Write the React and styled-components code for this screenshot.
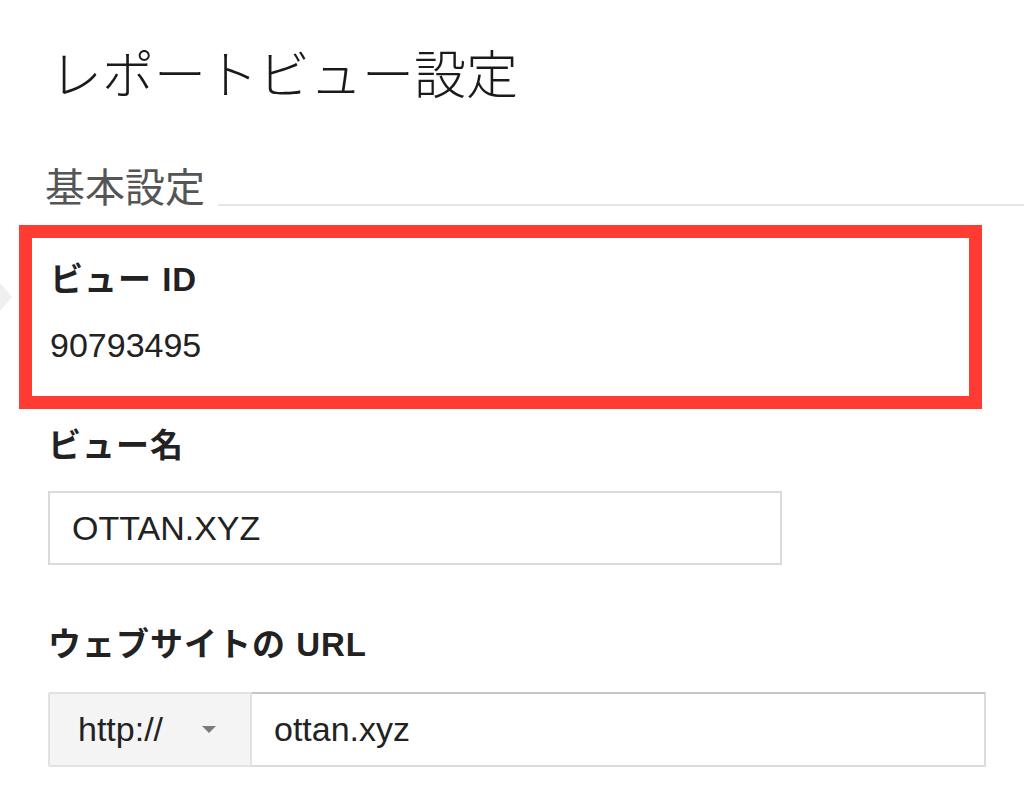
import styled, { createGlobalStyle } from "styled-components";

const GlobalStyle = createGlobalStyle`
  html, body {
    margin: 0;
    padding: 0;
    background: #fff;
  }
  body {
    font-family: "Liberation Sans", "Noto Sans CJK JP", sans-serif;
    color: #222;
  }
`;

const Page = styled.div`
  position: relative;
  width: 1024px;
  height: 802px;
  overflow: hidden;
  padding: 50px 0 0 48px;
  box-sizing: border-box;
`;

const Title = styled.h1`
  margin: 0;
  font-size: 52px;
  line-height: 52px;
  font-weight: 300;
  color: #1a1a1a;
  padding-left: 2px;
`;

const SectionHeader = styled.div`
  display: flex;
  align-items: flex-end;
  margin: 66px 0 0 -3px;
`;

const SectionTitle = styled.h2`
  margin: 0;
  font-size: 40px;
  line-height: 40px;
  font-weight: 400;
  color: #555;
`;

const Divider = styled.div`
  flex: 1;
  height: 2px;
  margin: 0 0 2px 13px;
  background: #e6e6e6;
`;

const Highlight = styled.div`
  width: 963px;
  margin: 17px 0 0 -29px;
  padding: 22px 0 31px 18px;
  border: 13px solid #ff3b33;
  box-sizing: border-box;
`;

const Label = styled.div`
  font-size: 33px;
  line-height: 40px;
  font-weight: 700;
  letter-spacing: 1px;
  color: #222;
  margin-top: ${(p) => p.$top || 0}px;
`;

const Value = styled.div`
  font-size: 34px;
  line-height: 40px;
  margin-top: 25px;
  color: #222;
`;

const TextBox = styled.div`
  width: 734px;
  height: 74px;
  margin-top: 25px;
  border: 2px solid #dadada;
  box-sizing: border-box;
  display: flex;
  align-items: center;
  padding-left: 22px;
  font-size: 34px;
  color: #222;
`;

const UrlGroup = styled.div`
  display: flex;
  width: 938px;
  height: 75px;
  margin-top: 27px;
`;

const Scheme = styled.div`
  width: 204px;
  display: flex;
  align-items: center;
  justify-content: space-between;
  padding: 0 34px 0 28px;
  box-sizing: border-box;
  background: #f4f4f4;
  border: 2px solid #e2e2e2;
  border-radius: 2px 0 0 2px;
  font-size: 34px;
  color: #222;
`;

const Caret = styled.span`
  width: 0;
  height: 0;
  border-left: 7px solid transparent;
  border-right: 7px solid transparent;
  border-top: 7px solid #7a7a7a;
`;

const UrlInput = styled.div`
  flex: 1;
  display: flex;
  align-items: center;
  padding-left: 22px;
  border: 2px solid #dcdcdc;
  border-top-color: #c6c6c6;
  border-left: none;
  font-size: 34px;
  color: #222;
`;

const EdgeArrow = styled.svg`
  position: absolute;
  left: 0;
  top: 283px;
`;

export default function App() {
  return (
    <>
      <GlobalStyle />
      <Page>
        <EdgeArrow width="14" height="28" viewBox="0 0 14 28">
          <path d="M0 0 L12 14 L0 28 Z" fill="#efefef" />
        </EdgeArrow>
        <Title>レポートビュー設定</Title>
        <SectionHeader>
          <SectionTitle>基本設定</SectionTitle>
          <Divider />
        </SectionHeader>
        <Highlight>
          <Label>ビュー ID</Label>
          <Value>90793495</Value>
        </Highlight>
        <Label $top={17}>ビュー名</Label>
        <TextBox>OTTAN.XYZ</TextBox>
        <Label $top={60}>ウェブサイトの URL</Label>
        <UrlGroup>
          <Scheme>
            http://
            <Caret />
          </Scheme>
          <UrlInput>ottan.xyz</UrlInput>
        </UrlGroup>
      </Page>
    </>
  );
}
